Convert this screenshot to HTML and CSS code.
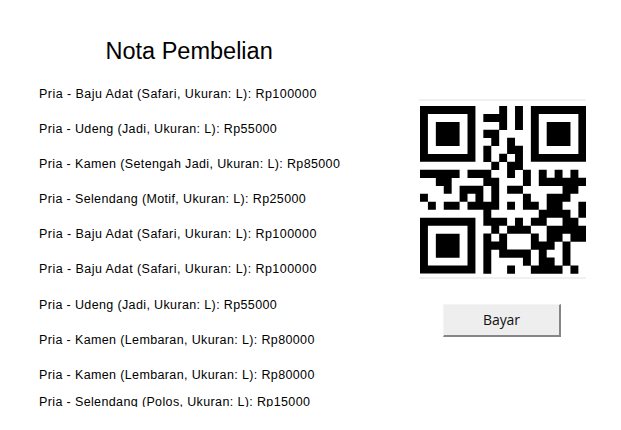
FILE: index.html
```html
<!DOCTYPE html>
<html lang="id">
<head>
<meta charset="utf-8">
<title>Nota Pembelian</title>
<link rel="stylesheet" href="styles.css">
</head>
<body>
<main class="window">
  <section class="receipt">
    <h1 class="title">Nota Pembelian</h1>
    <ul class="items">
      <li class="wide">Pria - Baju Adat (Safari, Ukuran: L): Rp100000</li>
      <li>Pria - Udeng (Jadi, Ukuran: L): Rp55000</li>
      <li>Pria - Kamen (Setengah Jadi, Ukuran: L): Rp85000</li>
      <li>Pria - Selendang (Motif, Ukuran: L): Rp25000</li>
      <li class="wide">Pria - Baju Adat (Safari, Ukuran: L): Rp100000</li>
      <li class="wide">Pria - Baju Adat (Safari, Ukuran: L): Rp100000</li>
      <li>Pria - Udeng (Jadi, Ukuran: L): Rp55000</li>
      <li>Pria - Kamen (Lembaran, Ukuran: L): Rp80000</li>
      <li>Pria - Kamen (Lembaran, Ukuran: L): Rp80000</li>
      <li class="clipped">Pria - Selendang (Polos, Ukuran: L): Rp15000</li>
    </ul>
  </section>
  <aside class="payment">
    <div class="qr">
      <svg viewBox="0 0 21 21" preserveAspectRatio="none">
        <path fill-rule="evenodd" d="M0 0h7v7h-7zM1 1v5h5v-5zM2 2h3v3h-3zM14 0h7v7h-7zM15 1v5h5v-5zM16 2h3v3h-3zM0 14h7v7h-7zM1 15v5h5v-5zM2 16h3v3h-3z"/>
        <path class="modules" d="M10 .5h1m1 0h1
          M8 1.5h3m1 0h1
          M10 2.5h1m1 0h1
          M8 3.5h2
          M9 4.5h1m1 0h1
          M8 5.5h1m2 0h2
          M8 6.5h1m1 0h1m1 0h1
          M9 7.5h1m1 0h2
          M0 8.5h5m1 0h3m2 0h1m1 0h1m1 0h1m1 0h1m1 0h1
          M2 9.5h2m4 0h2m3 0h1m1 0h6
          M3 10.5h1m1 0h3m1 0h1m1 0h2m5 0h2
          M0 11.5h1m4 0h1m1 0h1m1 0h1m3 0h1m2 0h3
          M1 12.5h1m1 0h2m1 0h4m1 0h1m1 0h2m1 0h2m2 0h1
          M8 13.5h1m6 0h4m1 0h1
          M8 14.5h3m1 0h1m1 0h2m2 0h2
          M9 15.5h1m1 0h3m2 0h5
          M8 16.5h1m1 0h1m3 0h1m1 0h2m1 0h2
          M8 17.5h3m3 0h3m1 0h1
          M8 18.5h1m1 0h4m1 0h1m2 0h1
          M8 19.5h1m4 0h1m1 0h2m1 0h1
          M8 20.5h1m2 0h1m2 0h4m1 0h1"/>
      </svg>
    </div>
    <button class="pay" type="button">Bayar</button>
  </aside>
</main>
</body>
</html>
```
FILE: styles.css
```css
* { box-sizing: border-box; }
body { margin: 0; background: #fff; color: #000; }
.window {
  display: flex;
  width: 621px;
  height: 430px;
  overflow: hidden;
  font-family: "Liberation Sans", Arial, sans-serif;
}
.receipt { width: 419px; padding-top: 36px; }
.title {
  margin: 0 0 0 105.5px;
  height: 41px;
  font-size: 23.5px;
  font-weight: 400;
  line-height: 30px;
}
.items {
  margin: 0;
  padding: 0 0 0 39px;
  list-style: none;
  font-size: 12.5px;
  letter-spacing: 0.37px;
  white-space: nowrap;
}
.items li { height: 35.1px; line-height: 35px; }
.items .wide { letter-spacing: 0.45px; }
.items .clipped { height: 14px; line-height: 18px; overflow: hidden; }
.payment { width: 167px; padding-top: 99px; }
.qr {
  width: 166.5px;
  height: 180px;
  padding-top: 5px;
  border-top: 2px solid #f0f0f0;
  border-bottom: 2px solid #f0f0f0;
}
.qr svg { display: block; width: 166.3px; height: 167.6px; margin-left: 0.5px; }
.modules { fill: none; stroke: #000; stroke-width: 1.02; }
.pay {
  display: block;
  width: 118px;
  height: 33px;
  margin: 25px 0 0 24px;
  padding: 0 0 1px;
  border: 1px solid #f4f4f4;
  border-right: 2px solid #858585;
  border-bottom: 2px solid #858585;
  background: #eee;
  color: #111;
  font: 14px "Open Sans", "Noto Sans", sans-serif;
  letter-spacing: -0.1px;
}
```
